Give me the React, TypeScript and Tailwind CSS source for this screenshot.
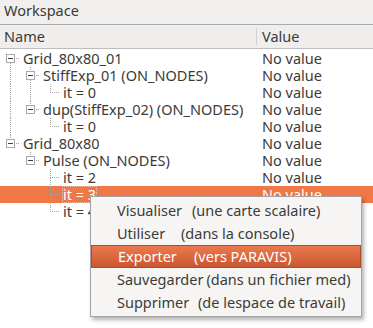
import React from "react";

type Branch = "pipe" | "blank" | "tee" | "corner" | "first";

type Row = {
  label: string;
  branches: Branch[];
  box?: boolean;
  selected?: boolean;
};

const rows: Row[] = [
  { label: "Grid_80x80_01", branches: ["first"], box: true },
  { label: "StiffExp_01 (ON_NODES)", branches: ["pipe", "tee"], box: true },
  { label: "it = 0", branches: ["pipe", "pipe", "corner"] },
  { label: "dup(StiffExp_02) (ON_NODES)", branches: ["pipe", "corner"], box: true },
  { label: "it = 0", branches: ["pipe", "blank", "corner"] },
  { label: "Grid_80x80", branches: ["corner"], box: true },
  { label: "Pulse (ON_NODES)", branches: ["blank", "corner"], box: true },
  { label: "it = 2", branches: ["blank", "blank", "tee"] },
  { label: "it = 3", branches: ["blank", "blank", "tee"], selected: true },
  { label: "it = 4", branches: ["blank", "blank", "corner"] },
];

// second column of each menu entry starts at a fixed offset, as in the shot
const menu = [
  ["Visualiser", "(une carte scalaire)", "min-w-[75px]"],
  ["Utiliser", "(dans la console)", "min-w-[64px]"],
  ["Exporter", "(vers PARAVIS)", "min-w-[76px]"],
  ["Sauvegarder", "(dans un fichier med)", "min-w-[83px]"],
  ["Supprimer", "(de lespace de travail)", "min-w-[81px]"],
];

const dot = { stroke: "#a4a4a4", strokeWidth: 1, strokeDasharray: "1 1", shapeRendering: "crispEdges" as const };

const BranchCell = ({ kind, box, own }: { kind: Branch; box?: boolean; own: boolean }) => (
  <svg width="20" height="17" className="shrink-0 block">
    {kind === "pipe" && <line x1="10.5" y1="0" x2="10.5" y2="17" {...dot} />}
    {(kind === "tee" || kind === "corner") && <line x1="10.5" y1="0" x2="10.5" y2="8.5" {...dot} />}
    {(kind === "tee" || kind === "first") && <line x1="10.5" y1="8.5" x2="10.5" y2="17" {...dot} />}
    {own && <line x1="10" y1="8.5" x2="20" y2="8.5" {...dot} />}
    {box && (
      <g shapeRendering="crispEdges">
        <rect x="6.5" y="4.5" width="8" height="8" fill="#ffffff" stroke="#a8a8a8" />
        <line x1="8" y1="8.5" x2="13" y2="8.5" stroke="#3c3c3c" />
      </g>
    )}
  </svg>
);

export default function App() {
  return (
    <div className="relative w-[373px] h-[328px] overflow-hidden bg-white text-[14.5px] leading-[17px] text-[#3c3b37] font-['Noto_Sans',sans-serif]">
      <div className="h-[22px] bg-[#f0efed] pl-[4px] pt-[2px] border-b border-[#aaaaaa] box-content">Workspace</div>
      <div className="flex h-[24px] items-center bg-[#efeeec] border-b border-[#bdbdbd]">
        <div className="w-[256px] pl-[4px]">Name</div>
        <div className="h-[17px] border-l border-[#d0d0d0] pl-[5px]">Value</div>
      </div>
      <div className="pt-[1px]">
        {rows.map((r, i) => (
          <div key={i} className={`flex h-[17px] ${r.selected ? "bg-[#f07746] text-white" : ""}`}>
            <div className="flex w-[256px] shrink-0">
              {r.branches.map((b, j) => (
                <BranchCell key={j} kind={b} own={j === r.branches.length - 1} box={r.box && j === r.branches.length - 1} />
              ))}
              <span className={`ml-[2px] px-[1px] whitespace-nowrap ${r.selected ? "outline outline-1 outline-dotted outline-[#f7c0a8] -outline-offset-1" : ""}`}>
                {r.label}
              </span>
            </div>
            <div className="pl-[6px] whitespace-nowrap">No value</div>
          </div>
        ))}
      </div>

      <div className="absolute left-[90px] top-[196px] w-[272px] py-[2px] bg-[#f6f5f4] border border-[#a3a3a3] shadow-[2px_3px_4px_rgba(0,0,0,0.3)]">
        {menu.map(([a, b, w], i) => (
          <div
            key={i}
            className={`flex h-[23px] items-center pl-[26px] whitespace-nowrap ${
              i === 2 ? "bg-gradient-to-b from-[#ec7a4e] to-[#c95632] text-white border border-[#b24a28]" : ""
            }`}
          >
            <span className={`${w} pr-[3px]`}>{a}</span>
            <span>{b}</span>
          </div>
        ))}
      </div>
    </div>
  );
}
